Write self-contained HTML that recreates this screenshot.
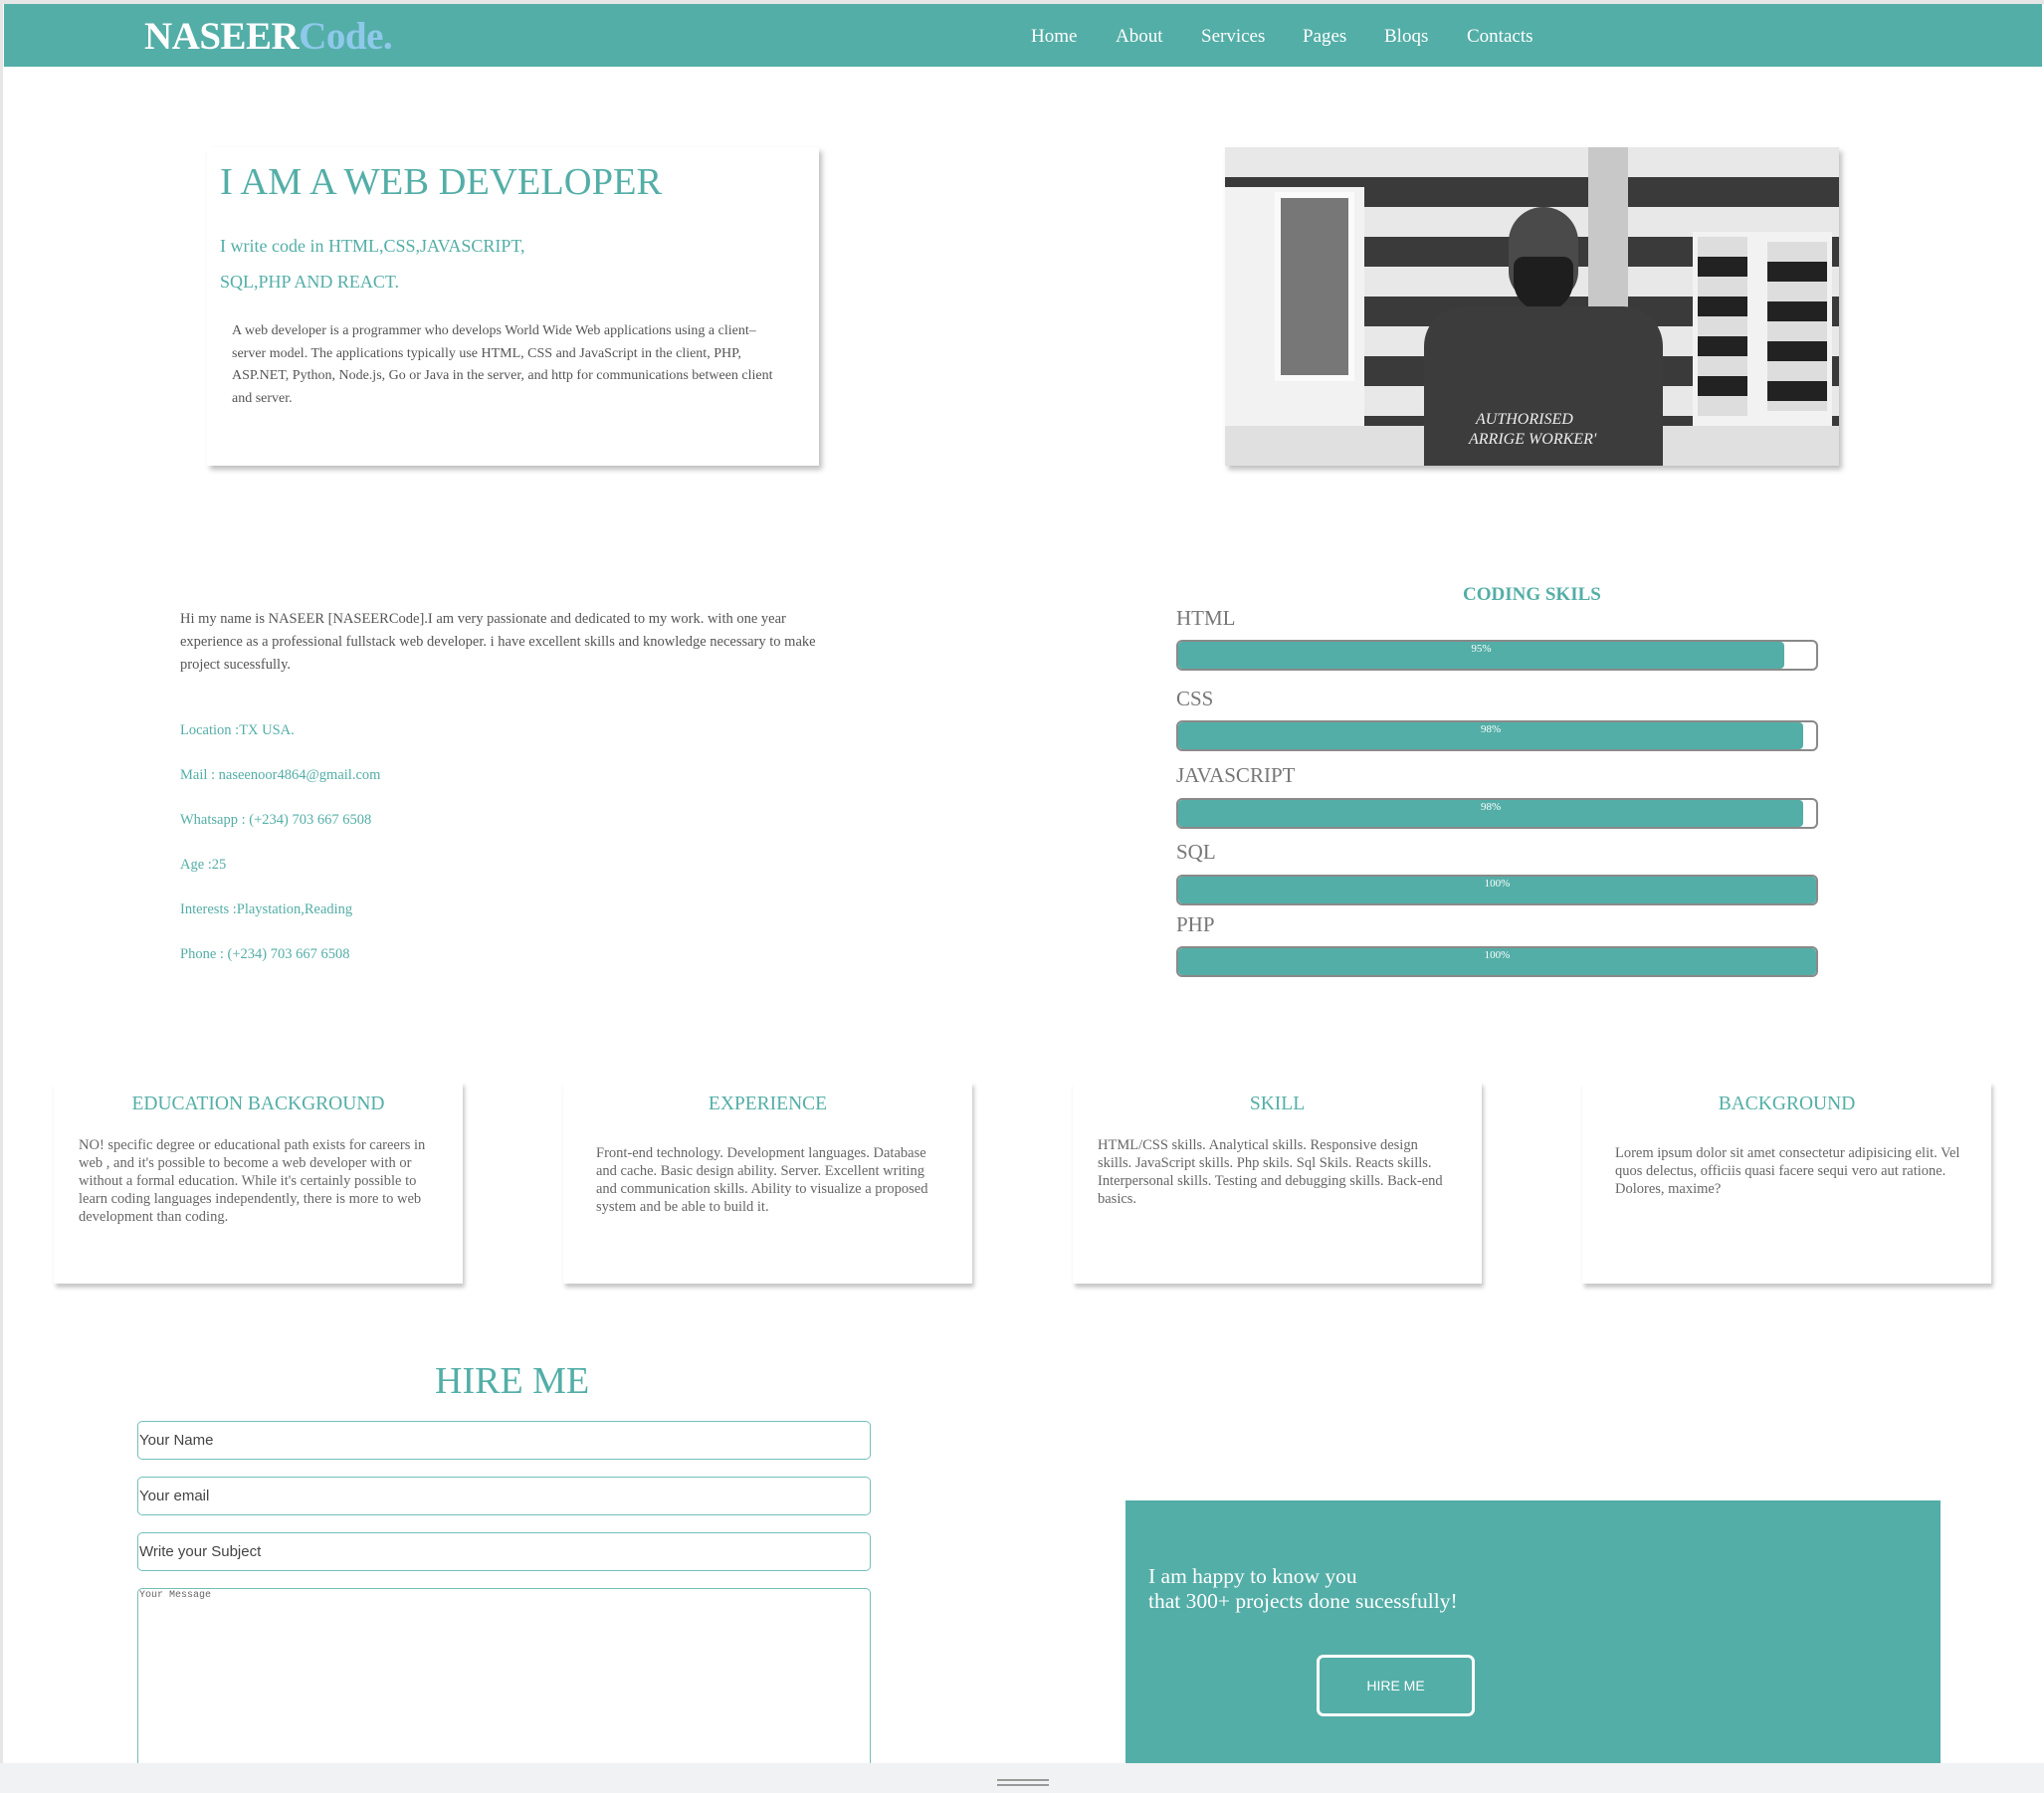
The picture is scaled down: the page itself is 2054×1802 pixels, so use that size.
<!DOCTYPE html>
<html><head><meta charset="utf-8"><style>
*{box-sizing:border-box;margin:0;padding:0}
html,body{width:2054px;height:1802px;overflow:hidden;background:#fff}
body{font-family:"Liberation Serif",serif;position:relative}
.a{position:absolute}
.t{color:#53aea7}
#frame{left:0;top:0;width:2054px;height:4px;background:#e6e6e6}
#lb{left:0;top:0;width:3px;height:1802px;background:#e6e6e6}
#nav{left:4px;top:4px;width:2048px;height:63px;background:#53aea7}
.logo{left:141px;top:10px;font-size:39px;font-weight:bold;color:#fff;letter-spacing:-0.5px}
.logo span{color:#8ec9ea}
.nl{top:22px;font-size:19px;color:#fff}
.card{background:#fff;box-shadow:3px 4px 5px rgba(0,0,0,.25)}
.p{color:#555;font-size:14px;line-height:22.5px}
.lab{left:1182px;font-size:21px;color:#777}
.bar{left:1182px;width:645px;height:31px;border:2px solid #8a8a8a;border-radius:6px;background:#fff;overflow:hidden}
.bar div{height:100%;background:#53aea7;border-radius:4px;color:#fff;font-size:11px;text-align:center;line-height:14px}
.ci{left:181px;font-size:14.5px;color:#53aea7}
.box{top:1087px;width:411px;height:203px;background:#fff;box-shadow:2px 4px 4px rgba(0,0,0,.22)}
.box h3{font-weight:normal;font-size:19.5px;color:#53aea7;text-align:center;margin-top:12px}
.box p{color:#666;font-size:14.5px;line-height:18px;padding:0 32px 0 25px;margin-top:21px}
.in{left:138px;width:737px;height:39px;border:1.5px solid #72c0b9;border-radius:5px;font-family:"Liberation Sans",sans-serif;font-size:15px;color:#444;line-height:37px;padding-left:1px}
</style></head><body>
<div class="a" id="frame"></div><div class="a" id="lb"></div>
<div class="a" id="nav">
<div class="a logo">NASEER<span>Code.</span></div>
<div class="a nl" style="left:1032px">Home</div>
<div class="a nl" style="left:1117px">About</div>
<div class="a nl" style="left:1203px">Services</div>
<div class="a nl" style="left:1305px">Pages</div>
<div class="a nl" style="left:1387px">Bloqs</div>
<div class="a nl" style="left:1470px">Contacts</div>
</div>

<div class="a card" style="left:208px;top:148px;width:615px;height:320px">
<div class="a t" style="left:13px;top:13px;font-size:38.5px;white-space:nowrap">I AM A WEB DEVELOPER</div>
<div class="a t" style="left:13px;top:89px;font-size:18px">I write code in HTML,CSS,JAVASCRIPT,</div>
<div class="a t" style="left:13px;top:125px;font-size:18px">SQL,PHP AND REACT.</div>
<div class="a p" style="left:25px;top:174px;width:548px">A web developer is a programmer who develops World Wide Web applications using a client–server model. The applications typically use HTML, CSS and JavaScript in the client, PHP, ASP.NET, Python, Node.js, Go or Java in the server, and http for communications between client and server.</div>
</div>

<div class="a card" style="left:1231px;top:148px;width:617px;height:320px;overflow:hidden;background:#9a9a9a">
<div class="a" style="left:0;top:0;width:617px;height:320px;background:repeating-linear-gradient(180deg,#e8e8e8 0 30px,#3a3a3a 30px 60px)"></div>
<div class="a" style="left:365px;top:0;width:40px;height:320px;background:#c8c8c8"></div>
<div class="a" style="left:0;top:40px;width:140px;height:240px;background:#f2f2f2"></div>
<div class="a" style="left:50px;top:45px;width:80px;height:190px;background:#777;border:6px solid #fafafa"></div>
<div class="a" style="left:470px;top:85px;width:140px;height:200px;background:#f2f2f2"></div>
<div class="a" style="left:475px;top:90px;width:50px;height:180px;background:repeating-linear-gradient(180deg,#ddd 0 20px,#222 20px 40px)"></div>
<div class="a" style="left:545px;top:95px;width:60px;height:170px;background:repeating-linear-gradient(180deg,#ddd 0 20px,#222 20px 40px)"></div>
<div class="a" style="left:0;top:280px;width:617px;height:40px;background:#e0e0e0"></div>
<div class="a" style="left:285px;top:60px;width:70px;height:95px;border-radius:35px 35px 30px 30px;background:#4a4a4a"></div>
<div class="a" style="left:290px;top:110px;width:60px;height:55px;border-radius:10px 10px 30px 30px;background:#1e1e1e"></div>
<div class="a" style="left:200px;top:160px;width:240px;height:170px;border-radius:40px 40px 0 0;background:#3c3c3c"></div>
<div class="a" style="left:252px;top:265px;color:#eee;font-size:16px;font-style:italic">AUTHORISED</div>
<div class="a" style="left:245px;top:285px;color:#eee;font-size:16px;font-style:italic">ARRIGE WORKER'</div>
</div>

<div class="a p" style="left:181px;top:611px;width:650px;font-size:14.5px;line-height:23px">Hi my name is NASEER [NASEERCode].I am very passionate and dedicated to my work. with one year experience as a professional fullstack web developer. i have excellent skills and knowledge necessary to make project sucessfully.</div>
<div class="a ci" style="top:726px">Location :TX USA.</div>
<div class="a ci" style="top:771px">Mail : naseenoor4864@gmail.com</div>
<div class="a ci" style="top:816px">Whatsapp : (+234) 703 667 6508</div>
<div class="a ci" style="top:861px">Age :25</div>
<div class="a ci" style="top:906px">Interests :Playstation,Reading</div>
<div class="a ci" style="top:951px">Phone : (+234) 703 667 6508</div>

<div class="a t" style="left:1470px;top:587px;font-size:19px;font-weight:bold">CODING SKILS</div>
<div class="a lab" style="top:609px">HTML</div>
<div class="a bar" style="top:643px"><div style="width:95%">95%</div></div>
<div class="a lab" style="top:690px">CSS</div>
<div class="a bar" style="top:724px"><div style="width:98%">98%</div></div>
<div class="a lab" style="top:767px">JAVASCRIPT</div>
<div class="a bar" style="top:802px"><div style="width:98%">98%</div></div>
<div class="a lab" style="top:844px">SQL</div>
<div class="a bar" style="top:879px"><div style="width:100%">100%</div></div>
<div class="a lab" style="top:917px">PHP</div>
<div class="a bar" style="top:951px"><div style="width:100%">100%</div></div>

<div class="a box" style="left:54px"><h3>EDUCATION BACKGROUND</h3><p>NO! specific degree or educational path exists for careers in web , and it's possible to become a web developer with or without a formal education. While it's certainly possible to learn coding languages independently, there is more to web development than coding.</p></div>
<div class="a box" style="left:566px"><h3>EXPERIENCE</h3><p style="margin-top:29px;padding:0 40px 0 33px">Front-end technology. Development languages. Database and cache. Basic design ability. Server. Excellent writing and communication skills. Ability to visualize a proposed system and be able to build it.</p></div>
<div class="a box" style="left:1078px"><h3>SKILL</h3><p>HTML/CSS skills. Analytical skills. Responsive design skills. JavaScript skills. Php skils. Sql Skils. Reacts skills. Interpersonal skills. Testing and debugging skills. Back-end basics.</p></div>
<div class="a box" style="left:1590px"><h3>BACKGROUND</h3><p style="margin-top:29px;padding:0 30px 0 33px">Lorem ipsum dolor sit amet consectetur adipisicing elit. Vel quos delectus, officiis quasi facere sequi vero aut ratione. Dolores, maxime?</p></div>

<div class="a t" style="left:437px;top:1366px;font-size:38px">HIRE ME</div>
<div class="a in" style="top:1428px">Your Name</div>
<div class="a in" style="top:1484px">Your email</div>
<div class="a in" style="top:1540px">Write your Subject</div>
<div class="a in" style="top:1596px;height:220px;font-family:'Liberation Mono',monospace;font-size:10px;line-height:14px;color:#666">Your Message</div>

<div class="a" style="left:1131px;top:1508px;width:819px;height:280px;background:#53aea7">
<div class="a" style="left:23px;top:64px;color:#fff;font-size:21.5px;line-height:25px">I am happy to know you<br>that 300+ projects done sucessfully!</div>
<div class="a" style="left:192px;top:155px;width:159px;height:62px;border:3px solid #fff;border-radius:7px;color:#fff;font-family:'Liberation Sans',sans-serif;font-size:14px;text-align:center;line-height:56px">HIRE ME</div>
</div>

<div class="a" style="left:0;top:1772px;width:2054px;height:30px;background:#f1f2f4"></div>
<div class="a" style="left:1002px;top:1788px;width:52px;height:2px;background:#999"></div>
<div class="a" style="left:1002px;top:1793px;width:52px;height:2px;background:#999"></div>
</body></html>
